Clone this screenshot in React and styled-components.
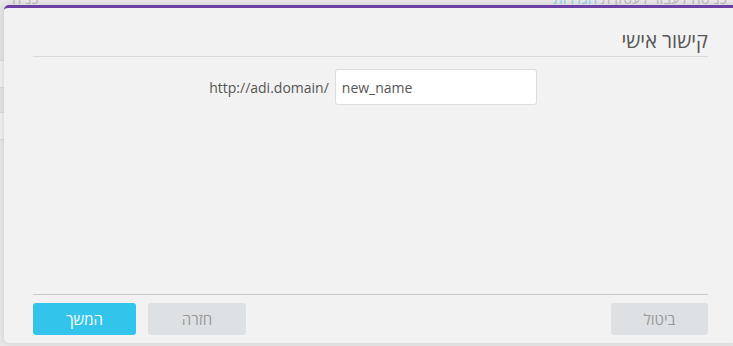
import React from 'react';
import styled, { createGlobalStyle } from 'styled-components';

const GlobalStyle = createGlobalStyle`
  html, body {
    margin: 0;
    padding: 0;
    background: #e6e6e6;
    font-family: "Open Sans", "DejaVu Sans", sans-serif;
  }
`;

const Page = styled.div`
  position: relative;
  width: 733px;
  height: 346px;
  overflow: hidden;
  background: #e8e8e8;
`;

const Backdrop = styled.div`
  display: flex;
  flex-direction: column;
  height: 100%;
`;

const BackTop = styled.div`
  display: flex;
  justify-content: space-between;
  align-items: flex-end;
  height: 6px;
  padding: 0 6px 0 12px;
  font-size: 15px;
  line-height: 15px;
  color: #bbb;
  direction: rtl;
`;

const BackLink = styled.span`
  color: #8fd0ea;
`;

const BackRow = styled.div`
  height: ${p => p.h}px;
  background: ${p => p.bg};
  border-bottom: 1px solid #dcdcdc;
`;

const Modal = styled.div`
  position: absolute;
  top: 5px;
  left: 4px;
  width: 733px;
  height: 338px;
  box-sizing: border-box;
  background: #f2f2f2;
  border-top: 3px solid #6b3fa3;
  border-radius: 5px;
  box-shadow: 0 0 6px rgba(0, 0, 0, 0.12);
  padding: 0 29px;
  display: flex;
  flex-direction: column;
  direction: rtl;
`;

const Header = styled.div`
  height: 49px;
  box-sizing: border-box;
  padding-top: 21px;
  border-bottom: 1px solid #dadada;
  font-size: 20px;
  line-height: 24px;
  color: #555;
`;

const Body = styled.div`
  flex: 1;
  padding-top: 12px;
`;

const LinkRow = styled.div`
  direction: ltr;
  display: flex;
  justify-content: center;
  align-items: center;
  gap: 6px;
  padding-left: 5px;
`;

const Prefix = styled.span`
  font-size: 14px;
  color: #555;
`;

const NameInput = styled.input`
  width: 202px;
  height: 36px;
  box-sizing: border-box;
  border: 1px solid #dcdcdc;
  border-radius: 3px;
  background: #fff;
  padding: 0 6px;
  font-family: inherit;
  font-size: 14px;
  color: #555;
  outline: none;
`;

const Footer = styled.div`
  border-top: 1px solid #c9c9c9;
  padding: 8px 0 8px;
  display: flex;
  align-items: center;
  gap: 12px;
`;

const Spacer = styled.div`
  flex: 1;
`;

const Button = styled.button`
  width: ${p => p.w}px;
  height: 32px;
  border: none;
  border-radius: 3px;
  font-family: inherit;
  font-size: 15px;
  background: ${p => (p.primary ? '#33c4ec' : '#dee1e4')};
  color: ${p => (p.primary ? '#fff' : '#999')};
  cursor: pointer;
`;

export default function App() {
  return (
    <>
      <GlobalStyle />
      <Page>
        <Backdrop>
          <BackTop>
            <span>
              כניסה לעבור לעסקית <BackLink>הגדרות</BackLink>
            </span>
            <span>כניה</span>
          </BackTop>
          <BackRow h={54} bg="#e4e4e4" />
          <BackRow h={26} bg="#efefef" />
          <BackRow h={24} bg="#e4e4e4" />
          <BackRow h={26} bg="#efefef" />
        </Backdrop>
        <Modal>
          <Header>קישור אישי</Header>
          <Body>
            <LinkRow>
              <Prefix>http://adi.domain/</Prefix>
              <NameInput defaultValue="new_name" />
            </LinkRow>
          </Body>
          <Footer>
            <Button w={97}>ביטול</Button>
            <Spacer />
            <Button w={98}>חזרה</Button>
            <Button w={103} primary>
              המשך
            </Button>
          </Footer>
        </Modal>
      </Page>
    </>
  );
}
